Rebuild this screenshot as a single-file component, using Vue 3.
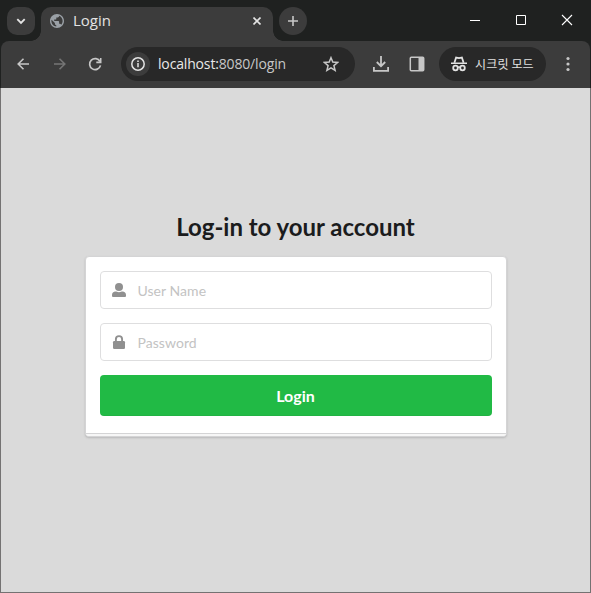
<script setup>
import { ref } from 'vue'

const username = ref('')
const password = ref('')
</script>

<template>
  <div class="window">
    <header class="titlebar">
      <button class="tab-search" aria-label="tabs">
        <svg width="28" height="28" viewBox="0 0 28 28"><path d="M10.3 12.2 14 15.9l3.7-3.7" fill="none" stroke="#e3e3e3" stroke-width="1.9" /></svg>
      </button>
      <div class="tab">
        <svg class="globe" width="14" height="14" viewBox="2 2 20 20">
          <path fill="#9aa0a6" d="M12 2C6.480 2 2 6.480 2 12s4.480 10 10 10 10-4.480 10-10S17.520 2 12 2zm-1 17.930c-3.950-.49-7-3.850-7-7.930 0-.62.08-1.210.21-1.790L9 15v1c0 1.100.9 2 2 2v1.930zm6.900-2.540c-.26-.81-1-1.390-1.900-1.390h-1v-3c0-.55-.45-1-1-1H8v-2h2c.55 0 1-.45 1-1V7h2c1.100 0 2-.9 2-2v-.41c2.930 1.190 5 4.060 5 7.410 0 2.080-.8 3.970-2.100 5.390z" />
        </svg>
        <span class="tab-title">Login</span>
        <svg class="tab-close" width="8" height="8" viewBox="0 0 8 8"><path d="m.5.5 7 7m0-7-7 7" stroke="#e3e3e3" stroke-width="1.6" /></svg>
      </div>
      <button class="new-tab" aria-label="new tab">
        <svg width="28" height="28" viewBox="0 0 28 28"><path d="M9 14h10M14 9v10" stroke="#c7c7c7" stroke-width="1.6" /></svg>
      </button>
      <div class="controls">
        <svg width="46" height="40" viewBox="0 0 46 40"><path d="M18 20.5h10" stroke="#fff" /></svg>
        <svg width="46" height="40" viewBox="0 0 46 40"><path d="M18.5 15.5h9v9h-9z" fill="none" stroke="#fff" /></svg>
        <svg width="46" height="40" viewBox="0 0 46 40"><path d="m18 15 10 10m0-10L18 25" stroke="#fff" stroke-width="1.1" /></svg>
      </div>
    </header>

    <nav class="toolbar">
      <svg class="nav-icon" width="36" height="34" viewBox="0 0 36 34"><path d="M28 17H17.3m5.2-5.3L17.2 17l5.3 5.3" fill="none" stroke="#c7c7c7" stroke-width="1.6" /></svg>
      <svg class="nav-icon" width="36" height="34" viewBox="0 0 36 34"><path d="M17 17h10.7m-5.2-5.3 5.3 5.3-5.3 5.3" fill="none" stroke="#757575" stroke-width="1.6" /></svg>
      <svg class="nav-icon" width="36" height="34" viewBox="0 0 36 34"><path d="M27 14.500A5.500 5.500 0 1 0 27.500 18.400" fill="none" stroke="#c7c7c7" stroke-width="1.7" /><path d="M28.500 11v5.200h-5.200v-1.600h3.600V11z" fill="#c7c7c7" /></svg>
      <div class="address">
        <span class="info">
          <svg width="24" height="24" viewBox="0 0 24 24"><circle cx="12" cy="12" r="6.200" fill="none" stroke="#e3e3e3" stroke-width="1.5" /><path d="M12 11v4.300" stroke="#e3e3e3" stroke-width="1.5" /><path d="M11.200 8.400h1.600V10h-1.600z" fill="#e3e3e3" /></svg>
        </span>
        <span class="url"><b>localhost:</b>8080/login</span>
        <svg class="star" width="16" height="16" viewBox="0 0 16 16"><path d="m8 1.700 1.800 4.400 4.800.4-3.700 3.100 1.200 4.700L8 11.800l-4.100 2.500 1.200-4.700-3.700-3.100 4.800-.4z" fill="none" stroke="#c7c7c7" stroke-width="1.5" /></svg>
      </div>
      <svg class="download" width="16" height="16" viewBox="0 0 16 16"><path d="M8 0v10M3.800 6 8 10.200 12.200 6M.9 11v3.900h14.200V11" fill="none" stroke="#c7c7c7" stroke-width="1.8" /></svg>
      <svg class="panel" width="16" height="16" viewBox="0 0 16 16"><rect x="1.300" y="1.300" width="13.400" height="13.400" rx="1" fill="none" stroke="#c7c7c7" stroke-width="1.500" /><path d="M9.500 1H15v14H9.500z" fill="#c7c7c7" /></svg>
      <div class="incognito">
        <svg width="16" height="16" viewBox="0 0 16 16"><path d="M0 6.500h16V8H0z" fill="#e3e3e3" /><path d="M3.400 6.800 5.100 1.500 8 2.100l2.900-.6 1.700 5.300" fill="none" stroke="#e3e3e3" stroke-width="1.8" /><circle cx="4.500" cy="12" r="2.300" fill="none" stroke="#e3e3e3" stroke-width="1.8" /><circle cx="11.500" cy="12" r="2.300" fill="none" stroke="#e3e3e3" stroke-width="1.8" /><path d="M6.500 11.500q1.500-1 3 0" fill="none" stroke="#e3e3e3" stroke-width="1.4" /></svg>
        <span class="incognito-label">시크릿 모드</span>
      </div>
      <svg class="menu" width="4" height="16" viewBox="0 0 4 16"><g fill="#c7c7c7"><circle cx="2" cy="2.500" r="1.600" /><circle cx="2" cy="8" r="1.600" /><circle cx="2" cy="13.500" r="1.600" /></g></svg>
    </nav>

    <main class="page">
      <h2>Log-in to your account</h2>
      <form class="card" @submit.prevent>
        <div class="fields">
          <label class="field">
            <svg width="14" height="14" viewBox="0 0 14 14"><circle cx="7" cy="4" r="4" fill="#909090" /><path d="M0 13v-1.100c0-2 1.400-3.300 3.500-3.300 1 0 1.700.6 3.500.6s2.500-.6 3.500-.6c2.100 0 3.500 1.300 3.500 3.300V13a1 1 0 0 1-1 1H1a1 1 0 0 1-1-1Z" fill="#909090" /></svg>
            <input v-model="username" type="text" placeholder="User Name">
          </label>
          <label class="field">
            <svg width="14" height="14" viewBox="0 0 14 14"><rect x="1" y="6" width="12" height="8" rx="1.200" fill="#909090" /><path d="M3.900 7V4.200a3.100 3.100 0 0 1 6.200 0V7" fill="none" stroke="#909090" stroke-width="1.9" /></svg>
            <input v-model="password" type="password" placeholder="Password">
          </label>
          <button class="submit" type="submit">Login</button>
        </div>
        <div class="stack"></div>
      </form>
    </main>
  </div>
</template>

<style>
body { margin: 0; background: #1f2120; }
</style>

<style scoped>
* { box-sizing: border-box; }
button { border: 0; padding: 0; }
svg { display: block; flex: none; }
.window {
  width: 591px;
  height: 593px;
  overflow: hidden;
  display: flex;
  flex-direction: column;
  background: #1f2120;
}
.titlebar { height: 41px; display: flex; padding: 0 1px 0 7px; flex: none; }
.tab-search { width: 28px; height: 28px; margin-top: 7px; border-radius: 10px; background: #3c3c3c; }
.tab {
  position: relative;
  width: 232px;
  height: 34px;
  margin: 7px 0 0 6px;
  padding: 0 12px 6px 9px;
  display: flex;
  align-items: center;
  background: #3c3c3c;
  border-radius: 10px 10px 0 0;
}
.tab::before,
.tab::after { content: ""; position: absolute; bottom: 0; width: 10px; height: 10px; }
.tab::before { right: 100%; background: radial-gradient(circle at 0 0, transparent 9.500px, #3c3c3c 10px); }
.tab::after { left: 100%; background: radial-gradient(circle at 100% 0, transparent 9.500px, #3c3c3c 10px); }
.tab-title { margin-left: 9px; padding-bottom: 2px; color: #e3e3e3; font: 15px/20px "Open Sans", sans-serif; }
.tab-close { margin-left: auto; }
.new-tab { width: 28px; height: 28px; margin: 7px 0 0 6px; border-radius: 50%; background: #3c3c3c; }
.controls { display: flex; margin-left: auto; }
.toolbar {
  flex: none;
  height: 47px;
  margin: 0 1px;
  padding: 6px 20px 7px 0;
  display: flex;
  align-items: center;
  background: #3c3c3c;
  border-radius: 8px 8px 0 0;
}
.address {
  width: 234px;
  height: 34px;
  margin-left: 12px;
  padding: 0 16px 0 5px;
  display: flex;
  align-items: center;
  border-radius: 17px;
  background: #282828;
}
.info { border-radius: 50%; background: #3c3c3c; }
.url { margin-left: 8px; color: #c7c7c7; font: 14px/20px "Open Sans", sans-serif; letter-spacing: -.16px; }
.url b { color: #e9e9e9; font-weight: 400; }
.star { margin-left: auto; }
.download { margin-left: 18px; }
.panel { margin-left: 20px; }
.incognito {
  width: 107px;
  height: 34px;
  margin-left: 14px;
  padding: 0 12px;
  display: flex;
  align-items: center;
  gap: 8px;
  border-radius: 17px;
  background: #282828;
  color: #e3e3e3;
  font: 12px/18px "Noto Sans CJK KR", sans-serif;
  letter-spacing: .15px;
  white-space: nowrap;
}
.incognito-label { padding-bottom: 1px; }
.menu { margin-left: auto; }
.page {
  flex: 1;
  display: flex;
  flex-direction: column;
  align-items: center;
  padding-top: 123px;
  background: #dadada;
  border: solid #747272;
  border-width: 0 1px 1px;
  font-family: Lato, sans-serif;
}
h2 { margin: 0 0 14px; color: #1b1c1d; font-size: 24px; line-height: 31px; font-weight: 700; letter-spacing: -.02px; }
.card {
  width: 422px;
  border: 1px solid #d4d4d5;
  border-radius: 4px;
  background: #fff;
  box-shadow: 0 1px 2px rgba(34, 36, 38, .18);
  overflow: hidden;
}
.fields { display: flex; flex-direction: column; gap: 14px; padding: 14px 14px 17px; }
.field {
  height: 38px;
  padding: 0 12px;
  display: flex;
  align-items: center;
  gap: 12px;
  border: 1px solid #dededf;
  border-radius: 4px;
}
.field svg { margin-left: -1px; }
input { flex: 1; min-width: 0; padding: 0; border: 0; outline: 0; background: transparent; font: 14px/17px Lato, sans-serif; letter-spacing: .05px; color: #222; }
input::placeholder { color: #c3c3c3; opacity: 1; }
.submit {
  height: 41px;
  border-radius: 4px;
  background: #21ba45;
  box-shadow: inset 0 -1px rgba(34, 36, 38, .05);
  color: #fff;
  font: 700 16px/16px Lato, sans-serif;
}
.stack { height: 3px; border-top: 1px solid #d4d4d5; background: #f6f6f6; }
</style>
